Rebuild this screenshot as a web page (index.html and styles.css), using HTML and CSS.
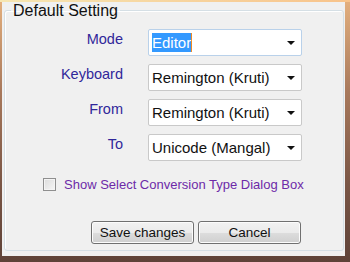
FILE: index.html
```html
<!doctype html>
<html lang="en">
<head>
<meta charset="utf-8" />
<title>Default Setting</title>
<link rel="stylesheet" href="styles.css">
</head>
<body>
  <div class="panel">
    <fieldset class="group">
      <legend>Default Setting</legend>

      <!-- 변환 설정 -->
      <div class="form">
        <label class="lbl">Mode</label>
        <div class="combo combo-focus">
          <span class="sel">Editor</span>
          <svg class="arrow" width="8" height="4" viewBox="0 0 8 4"><polygon points="0,0 8,0 4,4"/></svg>
        </div>

        <label class="lbl">Keyboard</label>
        <div class="combo">
          <span>Remington (Kruti)</span>
          <svg class="arrow" width="8" height="4" viewBox="0 0 8 4"><polygon points="0,0 8,0 4,4"/></svg>
        </div>

        <label class="lbl">From</label>
        <div class="combo">
          <span>Remington (Kruti)</span>
          <svg class="arrow" width="8" height="4" viewBox="0 0 8 4"><polygon points="0,0 8,0 4,4"/></svg>
        </div>

        <label class="lbl">To</label>
        <div class="combo">
          <span>Unicode (Mangal)</span>
          <svg class="arrow" width="8" height="4" viewBox="0 0 8 4"><polygon points="0,0 8,0 4,4"/></svg>
        </div>
      </div>

      <label class="check">
        <span class="box"></span>
        <span>Show Select Conversion Type Dialog Box</span>
      </label>

      <div class="buttons">
        <button class="btn">Save changes</button>
        <button class="btn">Cancel</button>
      </div>
    </fieldset>
  </div>
</body>
</html>
```

FILE: styles.css
```css
:root{
  --panel  :#f0f0f0;
  --label  :#30279a;
  --check  :#6d2aa8;
  --edge   :#d5dfe5;
}

*{margin:0;padding:0;box-sizing:border-box}
body{
  width:350px;height:262px;overflow:hidden;
  font-family:"Liberation Sans",Arial,sans-serif;
  background:
    linear-gradient(90deg,#f6e6b2,#f8c38b) top/100% 2px no-repeat,
    linear-gradient(180deg,#e4b07e 0,#a8795c 35%,#7a5646 70%,#5e4238 100%);
}

/* === 창 본체 === */
.panel{
  margin:2px 5px 6px 2px;height:254px;
  background:var(--panel);
  padding:0 1px 0 2px;
}

/* === 그룹 박스 === */
.group{
  border:1px solid var(--edge);border-radius:3px;
  padding:10px 0 6px 0;
  box-shadow:inset 1px 1px 0 #fff;
}
.group legend{
  margin-left:6px;padding:0 2px;
  font-size:16px;line-height:17px;color:#111;
}

/* === 라벨 + 콤보 === */
.form{
  display:grid;
  grid-template-columns:118px 154px;
  column-gap:25px;row-gap:8px;
}
.lbl{
  text-align:right;align-self:start;
  padding-top:2px;
  font-size:14.5px;line-height:17px;color:var(--label);
}
.combo{
  height:27px;
  display:flex;align-items:center;justify-content:space-between;
  padding:0 6px 0 3px;
  background:#fff;border:1px solid #c9c9c9;border-radius:2px;
  font-size:15px;line-height:17px;color:#111;
}
.combo-focus{border-color:#b9d1ea;}
.sel{
  background:#3399ff;color:#fff;line-height:19px;
  border-right:1px solid #f08a24;
}
.arrow{fill:#111;flex:none;}

/* === 체크박스 === */
.check{
  display:flex;align-items:center;gap:8px;
  margin-top:15px;height:16px;padding-left:38px;
  font-size:13px;color:var(--check);
}
.box{
  width:13px;height:13px;flex:none;
  border:1px solid #8f8f8f;
  background:linear-gradient(135deg,#dcdcdc,#f6f6f6);
  box-shadow:inset 0 0 0 1px #f4f4f4;
}

/* === 버튼 === */
.buttons{
  display:flex;gap:4px;
  margin-top:29px;padding-left:86px;
}
.btn{
  width:103px;height:23px;
  font-family:inherit;font-size:13.5px;color:#111;
  border:1px solid #707070;border-radius:3px;
  background:linear-gradient(180deg,#f2f2f2 0,#ebebeb 50%,#dddddd 51%,#cfcfcf 100%);
  box-shadow:inset 0 0 0 1px #fcfcfc;
}
```
